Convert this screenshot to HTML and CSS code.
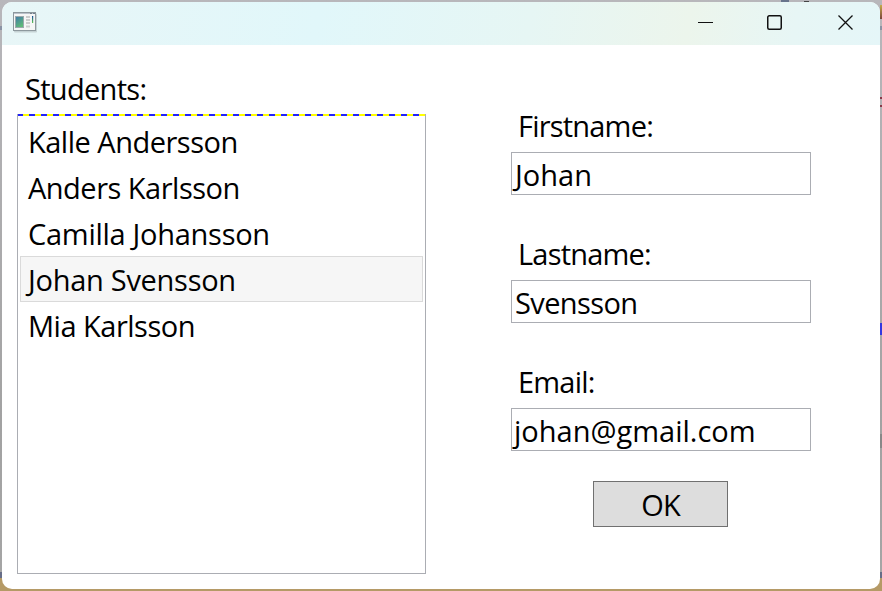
FILE: index.html
```
<!DOCTYPE html>
<html lang="en">
<head>
<meta charset="utf-8">
<title>Students</title>
<link rel="stylesheet" href="styles.css">
</head>
<body>
<div class="window">
  <header class="titlebar">
    <svg class="app-icon" width="24" height="21" viewBox="0 0 24 21">
      <rect x="1" y="1.5" width="23" height="19" rx="1" fill="#c5d2d4"/>
      <rect x=".5" y=".5" width="22" height="18" fill="#f5f6f6" stroke="#8d989d"/>
      <path d="M1 1.5h21" stroke="#b9c1ca"/><path d="M17 1.5h2M20 1.5h2" stroke="#737f8c"/>
      <rect x="2.5" y="4.5" width="8" height="11" fill="url(#pic)" stroke="#9ba9ac"/>
      <path d="M13 5h4M13 8h4M13 11h4M13 14.500h4" stroke="#cbcdcd" stroke-width="2"/>
      <rect x="19" y="4" width="1.200" height="7" fill="url(#bar)"/>
      <defs>
        <linearGradient id="pic" x2=".5" y2="1"><stop stop-color="#3e79a9"/><stop offset="1" stop-color="#5fba78"/></linearGradient>
        <linearGradient id="bar" x2="0" y2="1"><stop stop-color="#164c9a"/><stop offset="1" stop-color="#60c552"/></linearGradient>
      </defs>
    </svg>
    <svg class="controls" width="158" height="17" viewBox="0 0 158 17" fill="none" stroke="#111">
      <path d="M0 8.500h15" stroke-width="1"/>
      <rect x="69.750" y="1.750" width="13.500" height="13.500" rx="1.500" stroke-width="1.500"/>
      <path d="M140.500 1.500l14 14M154.500 1.500l-14 14" stroke-width="1.300"/>
    </svg>
  </header>
  <main class="content">
    <section class="students">
      <div class="label students-label">Students:</div>
      <ul class="list">
        <li>Kalle Andersson</li>
        <li>Anders Karlsson</li>
        <li class="loose">Camilla Johansson</li>
        <li class="loose selected">Johan Svensson</li>
        <li>Mia Karlsson</li>
      </ul>
    </section>
    <section class="form">
      <div class="field"><div class="label">Firstname:</div><div class="input wide">Johan</div></div>
      <div class="field"><div class="label">Lastname:</div><div class="input">Svensson</div></div>
      <div class="field"><div class="label">Email:</div><div class="input wide email">johan@gmail.com</div></div>
      <button class="ok">OK</button>
    </section>
  </main>
</div>
</body>
</html>
```
FILE: styles.css
```
* { box-sizing: border-box; }
body {
  margin: 0;
  width: 882px;
  height: 591px;
  padding: 2px;
  overflow: hidden;
  background:
    linear-gradient(#68748b, #68748b) 781px 0 / 8px 2px no-repeat,
    linear-gradient(#444, #444) 804px 1px / 5px 1px no-repeat,
    linear-gradient(#c4ab4b, #79443b) 880px 5px / 2px 14px no-repeat,
    linear-gradient(#3338e0, #3338e0) 880px 323px / 2px 12px no-repeat,
    linear-gradient(#883949, #883949) 880px 97px / 2px 2px no-repeat,
    linear-gradient(#883949, #883949) 880px 105px / 2px 2px no-repeat,
    linear-gradient(#8a93a4, #8a93a4) 0 26px / 882px 4px no-repeat,
    linear-gradient(#888, #888) 880px 434px / 2px 14px no-repeat,
    linear-gradient(#b8b7bb 0, #a2a2a2 420px, #a5a5a5 572px, #666d87 572px, #666d87 578px, #b59a66 578px);
  font-family: "Open Sans", "Noto Sans", sans-serif;
  font-size: 29px;
  letter-spacing: -.5px;
  color: #000;
}
.window {
  width: 878px;
  height: 587px;
  border-radius: 10px;
  overflow: hidden;
  background: #fff;
}
.titlebar {
  height: 43px;
  padding: 10px 24px 0 11px;
  display: flex;
  justify-content: space-between;
  background: linear-gradient(100deg, #e8f6f7 0%, #e1f7fa 36%, #e6f6f4 60%, #ecf5ec 78%, #e7f6f5 90%, #e5f6f8 100%);
}
.controls { margin: 2px 0 0; }
.content { display: flex; padding-left: 15px; }
.students { width: 409px; margin-right: 85px; }
.label {
  height: 40px;
  line-height: 38px;
  padding-left: 7px;
  letter-spacing: -.8px;
  white-space: nowrap;
}
.students-label { margin-top: 25px; height: 44px; padding-left: 8px; letter-spacing: -.7px; }
.list {
  height: 460px;
  margin: 0;
  padding: 4px 2px 0;
  list-style: none;
  border: 1px solid #abadb3;
  border-top: 0;
  background: repeating-linear-gradient(90deg, #2222fa 0 6px, #ff0 6px 12px) 0 0 / 100% 2px no-repeat;
  background-origin: border-box;
}
.list li {
  height: 46px;
  line-height: 46px;
  padding-left: 7px;
  border: 1px solid transparent;
}
.list .loose { letter-spacing: -.28px; }
.list .selected { background: #f6f6f6; border-color: #dadada; }
.form { width: 300px; padding-top: 62px; }
.field { height: 128px; }
.field .label { height: 45px; }
.input {
  height: 43px;
  line-height: 43px;
  padding-left: 3px;
  border: 1px solid #abadb3;
  letter-spacing: -.6px;
  white-space: nowrap;
}
.input.wide { letter-spacing: 0; }
.input.email { padding-left: 2px; }
.ok {
  display: block;
  width: 135px;
  height: 46px;
  margin: -10px 0 0 82px;
  padding: 0;
  border: 1px solid #707070;
  background: #ddd;
  color: #000;
  font: inherit;
  letter-spacing: -1px;
}
```
